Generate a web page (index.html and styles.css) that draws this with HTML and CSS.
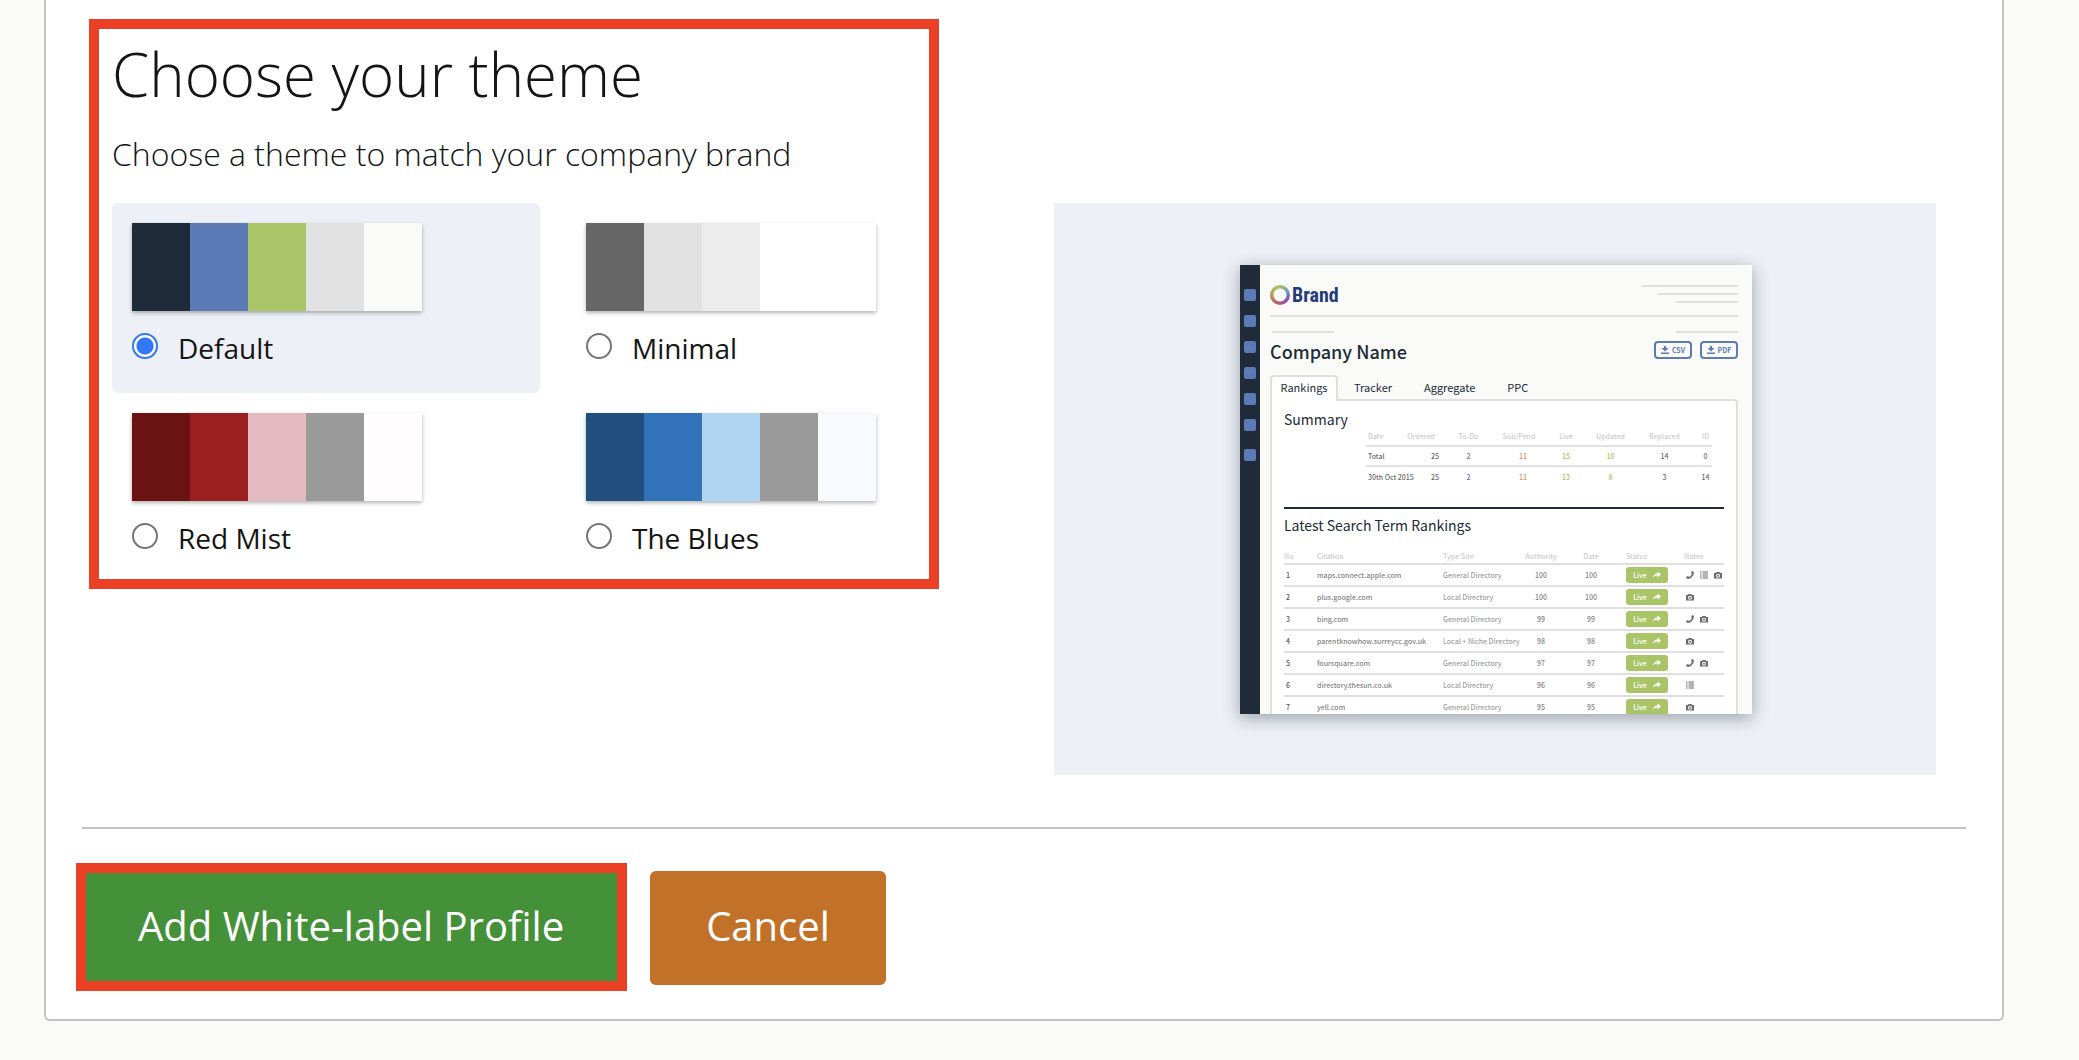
FILE: index.html
```html
<!DOCTYPE html>
<html lang="en">
<head>
    <meta charset="UTF-8">
    <meta name="viewport" content="width=device-width, initial-scale=1.0">
    <title>White-label Profile</title>
    <link rel="stylesheet" href="styles.css">
</head>
<body>
    <!-- shared icons -->
    <svg class="icon-defs" aria-hidden="true">
        <symbol id="icon-download" viewBox="0 0 16 16">
            <path d="M6 0h4v4h5L8 11 1 4h5zM0 13h16v3H0z"/>
        </symbol>
        <symbol id="icon-share" viewBox="0 0 16 16">
            <path d="M9 1l7 6-7 6v-4C5 9 2.500 10 0 14c.5-6 4-9 9-9z"/>
        </symbol>
        <symbol id="icon-phone" viewBox="0 0 16 16">
            <path d="M12 0l3.500 1.500C17 9 9 17 1.500 15.500L0 12l4-2 2 2c3-1.500 5-3.500 6-6.500l-2-1.500z"/>
        </symbol>
        <symbol id="icon-list" viewBox="0 0 16 16">
            <path d="M0 1h3v2H0zM5 1h11v2H5zM0 5h3v2H0zM5 5h11v2H5zM0 9h3v2H0zM5 9h11v2H5zM0 13h3v2H0zM5 13h11v2H5z"/>
        </symbol>
        <symbol id="icon-camera" viewBox="0 0 16 16">
            <path fill-rule="evenodd" d="M5 2h6l1 2h4v11H0V4h4zM8 5.500a4 4 0 1 0 0 8 4 4 0 0 0 0-8zM8 7.500a2 2 0 1 1 0 4 2 2 0 0 1 0-4z"/>
        </symbol>
    </svg>

    <form class="panel">
        <section class="theme-section">
            <h1 class="theme-title">Choose your theme</h1>
            <p class="theme-intro">Choose a theme to match your company brand</p>

            <div class="theme-columns">
                <div class="theme-list">
                    <label class="theme-card">
                        <span class="swatches">
                            <span class="swatch navy"></span>
                            <span class="swatch slate-blue"></span>
                            <span class="swatch lime"></span>
                            <span class="swatch silver"></span>
                            <span class="swatch off-white"></span>
                        </span>
                        <span class="theme-option">
                            <input type="radio" name="theme" value="default" checked>
                            <span>Default</span>
                        </span>
                    </label>
                    <label class="theme-card">
                        <span class="swatches">
                            <span class="swatch charcoal"></span>
                            <span class="swatch silver"></span>
                            <span class="swatch light-grey"></span>
                            <span class="swatch white"></span>
                            <span class="swatch white"></span>
                        </span>
                        <span class="theme-option">
                            <input type="radio" name="theme" value="minimal">
                            <span>Minimal</span>
                        </span>
                    </label>
                    <label class="theme-card">
                        <span class="swatches">
                            <span class="swatch maroon"></span>
                            <span class="swatch red"></span>
                            <span class="swatch pink"></span>
                            <span class="swatch grey"></span>
                            <span class="swatch blush"></span>
                        </span>
                        <span class="theme-option">
                            <input type="radio" name="theme" value="red-mist">
                            <span>Red Mist</span>
                        </span>
                    </label>
                    <label class="theme-card">
                        <span class="swatches">
                            <span class="swatch deep-blue"></span>
                            <span class="swatch blue"></span>
                            <span class="swatch sky"></span>
                            <span class="swatch grey"></span>
                            <span class="swatch ice"></span>
                        </span>
                        <span class="theme-option">
                            <input type="radio" name="theme" value="the-blues">
                            <span>The Blues</span>
                        </span>
                    </label>
                </div>

                <div class="preview">
                    <div class="report">
                        <div class="report-sidebar">
                            <span class="nav-dot"></span>
                            <span class="nav-dot"></span>
                            <span class="nav-dot"></span>
                            <span class="nav-dot"></span>
                            <span class="nav-dot"></span>
                            <span class="nav-dot"></span>
                            <span class="nav-dot last"></span>
                        </div>

                        <div class="report-main">
                            <div class="report-header">
                                <div class="brand">
                                    <span class="brand-ring"></span>
                                    <span class="brand-name">Brand</span>
                                </div>
                                <div class="address-lines">
                                    <span class="line long"></span>
                                    <span class="line medium"></span>
                                    <span class="line"></span>
                                </div>
                            </div>

                            <div class="meta-lines">
                                <span class="line"></span>
                                <span class="line"></span>
                            </div>

                            <div class="company-row">
                                <h2 class="company-name">Company Name</h2>
                                <div class="export-buttons">
                                    <button type="button" class="export-btn"><svg class="icon"><use href="#icon-download"/></svg>CSV</button>
                                    <button type="button" class="export-btn"><svg class="icon"><use href="#icon-download"/></svg>PDF</button>
                                </div>
                            </div>

                            <div class="tabs">
                                <button type="button" class="tab active">Rankings</button>
                                <button type="button" class="tab">Tracker</button>
                                <button type="button" class="tab">Aggregate</button>
                                <button type="button" class="tab">PPC</button>
                            </div>

                            <div class="tab-panel">
                                <div class="summary">
                                    <h3 class="report-heading">Summary</h3>
                                    <table class="summary-table">
                                        <colgroup>
                                            <col class="col-date"><col class="col-ordered"><col class="col-todo"><col class="col-pending">
                                            <col class="col-live"><col class="col-updated"><col class="col-replaced"><col class="col-id">
                                        </colgroup>
                                        <thead>
                                            <tr><th>Date</th><th>Ordered</th><th>To-Do</th><th>Sub/Pend</th><th>Live</th><th>Updated</th><th>Replaced</th><th>ID</th></tr>
                                        </thead>
                                        <tbody>
                                            <tr><td>Total</td><td>25</td><td class="todo">2</td><td class="pending">11</td><td class="live">15</td><td class="live">10</td><td>14</td><td>0</td></tr>
                                            <tr><td>30th Oct 2015</td><td>25</td><td class="todo">2</td><td class="pending">11</td><td class="live">13</td><td class="live">8</td><td>3</td><td>14</td></tr>
                                        </tbody>
                                    </table>
                                </div>

                                <div class="rankings">
                                    <h3 class="report-heading">Latest Search Term Rankings</h3>
                                    <table class="rankings-table">
                                        <colgroup>
                                            <col class="col-no"><col class="col-citation"><col class="col-type"><col class="col-authority">
                                            <col class="col-added"><col class="col-status"><col class="col-notes">
                                        </colgroup>
                                        <thead>
                                            <tr><th>No</th><th>Citation</th><th>Type Site</th><th>Authority</th><th>Date</th><th>Status</th><th>Notes</th></tr>
                                        </thead>
                                        <tbody>
                                            <tr>
                                                <td>1</td><td>maps.connect.apple.com</td><td>General Directory</td><td>100</td><td>100</td>
                                                <td><a href="#" class="live-btn">Live<svg class="icon"><use href="#icon-share"/></svg></a></td>
                                                <td><span class="notes"><svg class="icon"><use href="#icon-phone"/></svg><svg class="icon"><use href="#icon-list"/></svg><svg class="icon"><use href="#icon-camera"/></svg></span></td>
                                            </tr>
                                            <tr>
                                                <td>2</td><td>plus.google.com</td><td>Local Directory</td><td>100</td><td>100</td>
                                                <td><a href="#" class="live-btn">Live<svg class="icon"><use href="#icon-share"/></svg></a></td>
                                                <td><span class="notes"><svg class="icon"><use href="#icon-camera"/></svg></span></td>
                                            </tr>
                                            <tr>
                                                <td>3</td><td>bing.com</td><td>General Directory</td><td>99</td><td>99</td>
                                                <td><a href="#" class="live-btn">Live<svg class="icon"><use href="#icon-share"/></svg></a></td>
                                                <td><span class="notes"><svg class="icon"><use href="#icon-phone"/></svg><svg class="icon"><use href="#icon-camera"/></svg></span></td>
                                            </tr>
                                            <tr>
                                                <td>4</td><td>parentknowhow.surreycc.gov.uk</td><td>Local + Niche Directory</td><td>98</td><td>98</td>
                                                <td><a href="#" class="live-btn">Live<svg class="icon"><use href="#icon-share"/></svg></a></td>
                                                <td><span class="notes"><svg class="icon"><use href="#icon-camera"/></svg></span></td>
                                            </tr>
                                            <tr>
                                                <td>5</td><td>foursquare.com</td><td>General Directory</td><td>97</td><td>97</td>
                                                <td><a href="#" class="live-btn">Live<svg class="icon"><use href="#icon-share"/></svg></a></td>
                                                <td><span class="notes"><svg class="icon"><use href="#icon-phone"/></svg><svg class="icon"><use href="#icon-camera"/></svg></span></td>
                                            </tr>
                                            <tr>
                                                <td>6</td><td>directory.thesun.co.uk</td><td>Local Directory</td><td>96</td><td>96</td>
                                                <td><a href="#" class="live-btn">Live<svg class="icon"><use href="#icon-share"/></svg></a></td>
                                                <td><span class="notes"><svg class="icon"><use href="#icon-list"/></svg></span></td>
                                            </tr>
                                            <tr>
                                                <td>7</td><td>yell.com</td><td>General Directory</td><td>95</td><td>95</td>
                                                <td><a href="#" class="live-btn">Live<svg class="icon"><use href="#icon-share"/></svg></a></td>
                                                <td><span class="notes"><svg class="icon"><use href="#icon-camera"/></svg></span></td>
                                            </tr>
                                        </tbody>
                                    </table>
                                </div>
                            </div>
                        </div>
                    </div>
                </div>
            </div>
        </section>

        <div class="actions">
            <button type="submit" class="btn btn-add">Add White-label Profile</button>
            <button type="button" class="btn btn-cancel">Cancel</button>
        </div>
    </form>
</body>
</html>
```

FILE: styles.css
```css
*,
*::after {
    margin: 0;
    padding: 0;
    box-sizing: border-box;
}

body {
    font-family: "Open Sans", "Noto Sans", sans-serif;
    background: #fafaf8;
    color: #141414;
    padding: 0 75px 39px 44px;
}

button {
    font-family: inherit;
    cursor: pointer;
}

.icon-defs {
    display: none;
}

.icon {
    width: 8px;
    height: 8px;
    fill: currentColor;
    flex-shrink: 0;
}

.panel {
    background: #fff;
    border: 2px solid #c2c2c2;
    border-top: none;
    border-radius: 0 0 6px 6px;
    padding: 38px 36px 34px;
}

/* Theme picker */
.theme-section {
    position: relative;
    padding: 0 30px;
}

/* highlight frame round the theme picker */
.theme-section::after {
    content: '';
    position: absolute;
    top: -19px;
    left: 7px;
    width: 850px;
    height: 570px;
    border: 10px solid #ea4025;
    pointer-events: none;
}

.theme-title {
    font-size: 60px;
    line-height: 72px;
    font-weight: 300;
}

.theme-intro {
    margin-top: 22px;
    font-size: 32px;
    line-height: 44px;
    font-weight: 300;
}

.theme-columns {
    display: grid;
    grid-template-columns: repeat(2, minmax(0, 1fr));
    gap: 60px;
    margin-top: 27px;
}

.theme-list {
    display: grid;
    grid-template-columns: repeat(2, 1fr);
    column-gap: 26px;
    align-content: start;
}

.theme-card {
    padding: 20px 20px 26px;
    border-radius: 6px;
    cursor: pointer;
}

.theme-card:has(input:checked) {
    background: #edf0f6;
}

.swatches {
    display: flex;
    width: 290px;
    height: 88px;
    box-shadow: 0 2px 4px rgba(0, 0, 0, 0.3);
}

.swatch {
    flex: 1;
}

.navy { background: #202b39; }
.slate-blue { background: #5c7ab5; }
.lime { background: #aac468; }
.silver { background: #e1e1e1; }
.off-white { background: #fafaf8; }
.charcoal { background: #666; }
.light-grey { background: #ececec; }
.white { background: #fff; }
.maroon { background: #6b1213; }
.red { background: #9b1e20; }
.pink { background: #e2bac0; }
.grey { background: #9a9a9a; }
.blush { background: #fffdfe; }
.deep-blue { background: #21507f; }
.blue { background: #3272b9; }
.sky { background: #b0d5f2; }
.ice { background: #f9faff; }

.theme-option {
    display: flex;
    gap: 20px;
    margin-top: 18px;
    font-size: 28px;
    line-height: 38px;
}

.theme-option input {
    appearance: none;
    width: 26px;
    height: 26px;
    margin-top: 4px;
    border: 2px solid #767676;
    border-radius: 50%;
    background: #fff;
}

.theme-option input:checked {
    border-color: #3376f6;
    background: radial-gradient(circle, #3376f6 8px, #fff 9px);
}

/* Report preview */
.preview {
    display: flex;
    justify-content: center;
    padding: 62px 0 61px 2px;
    background: #edf0f6;
}

.report {
    display: flex;
    width: 512px;
    height: 449px;
    overflow: hidden;
    background: #fafaf8;
    color: #202b39;
    font-family: "Noto Sans CJK SC", "Noto Sans", sans-serif;
    box-shadow: 0 4px 16px rgba(32, 43, 57, 0.4);
}

.report-sidebar {
    width: 20px;
    padding: 24px 4px;
    display: flex;
    flex-direction: column;
    gap: 14px;
    background: #202b39;
}

.nav-dot {
    height: 12px;
    border-radius: 2px;
    background: #5c7ab5;
}

.nav-dot.last {
    margin-top: 4px;
}

.report-main {
    flex: 1;
    min-width: 0;
    padding: 20px 14px 0 10px;
}

.report-header {
    display: flex;
    justify-content: space-between;
    height: 32px;
    border-bottom: 2px solid #e0e0e0;
}

.brand {
    display: flex;
    gap: 2px;
    height: 20px;
}

.brand-ring {
    width: 20px;
    height: 20px;
    border-radius: 50%;
    background: radial-gradient(circle, #fafaf8 6px, transparent 7px),
        conic-gradient(#a2bf6a, #6fa0b8 60deg, #6c6fc0 100deg, #8a4fc4 130deg, #b25a72 180deg, #c07058 230deg, #b5a85f 290deg, #a9c467);
}

.brand-name {
    font-family: "Roboto Condensed", "Open Sans Condensed", "Noto Sans CJK SC", sans-serif;
    font-size: 20px;
    line-height: 20px;
    font-weight: 700;
    color: #253a78;
}

.address-lines {
    display: flex;
    flex-direction: column;
    align-items: flex-end;
    gap: 6px;
}

.line {
    width: 62px;
    height: 2px;
    background: #e0e0e0;
}

.line.medium {
    width: 80px;
}

.line.long {
    width: 96px;
}

.meta-lines {
    display: flex;
    justify-content: space-between;
    margin-top: 14px;
    padding-left: 2px;
}

.company-row {
    display: flex;
    justify-content: space-between;
    margin-top: 8px;
}

.company-name {
    font-size: 18px;
    line-height: 20px;
    height: 18px;
    font-weight: 500;
}

.export-buttons {
    display: flex;
    gap: 8px;
}

.export-btn {
    display: flex;
    align-items: center;
    justify-content: center;
    gap: 3px;
    width: 38px;
    height: 18px;
    border: 2px solid #5c7ab5;
    border-radius: 4px;
    background: none;
    color: #5c7ab5;
    font-size: 7px;
    line-height: 14px;
    font-weight: 700;
}

.tabs {
    display: flex;
    margin-top: 16px;
}

.tab {
    height: 26px;
    margin-bottom: -2px;
    padding: 0 16px 2px;
    border: none;
    background: none;
    color: inherit;
    font-size: 11px;
    line-height: 24px;
}

.tab.active {
    width: 68px;
    padding: 0 0 4px;
    border: 2px solid #e0e0e0;
    border-bottom: none;
    border-radius: 4px 4px 0 0;
    background: #fff;
    line-height: 20px;
    position: relative;
    z-index: 1;
}

.tab-panel {
    min-height: 400px;
    padding: 8px 12px 0;
    border: 2px solid #e0e0e0;
    border-radius: 0 4px 0 0;
    background: #fff;
}

.report-heading {
    font-size: 14px;
    line-height: 20px;
    font-weight: 400;
}

.summary {
    display: flex;
    height: 98px;
}

.summary .report-heading {
    width: 82px;
}

.report table {
    table-layout: fixed;
    border-collapse: separate;
    border-spacing: 0;
    font-size: 7px;
    line-height: 12px;
    font-weight: 500;
    white-space: nowrap;
}

.report th {
    color: #ccc;
    font-weight: 500;
    border-bottom: 2px solid #e0e0e0;
}

.summary-table {
    width: 346px;
    height: 60px;
    margin-top: 18px;
}

.summary-table th,
.summary-table td {
    height: 20px;
    text-align: center;
}

.summary-table td {
    color: #6b6b6b;
}

.summary-table tbody tr:first-child td {
    border-bottom: 2px solid #e0e0e0;
}

.summary-table th:first-child,
.summary-table td:first-child {
    padding-left: 2px;
    text-align: left;
}

.summary-table td:nth-child(2) {
    padding-right: 1px;
    text-align: right;
}

.report .todo { color: #5c7ab5; }
.report .pending { color: #cf9468; padding-left: 8px; }
.report .live { color: #aac468; }

.col-date { width: 36px; }
.col-ordered { width: 38px; }
.col-todo { width: 57px; }
.col-pending { width: 44px; }
.col-live { width: 50px; }
.col-updated { width: 39px; }
.col-replaced { width: 69px; }
.col-id { width: 13px; }

.rankings {
    padding-top: 6px;
    border-top: 2px solid #202b39;
}

.rankings-table {
    width: 100%;
    margin-top: 14px;
    text-align: left;
}

.rankings-table th {
    height: 16px;
}

.rankings-table td {
    height: 22px;
    border-bottom: 2px solid #e0e0e0;
    color: #858585;
}

.rankings-table td:first-child {
    padding-left: 2px;
    color: #555;
}

.rankings-table td:nth-child(3) {
    color: #a0a0a0;
}

.rankings-table th:nth-child(4),
.rankings-table td:nth-child(4),
.rankings-table th:nth-child(5),
.rankings-table td:nth-child(5) {
    text-align: center;
}

.rankings-table th:nth-child(6),
.rankings-table td:nth-child(6) {
    padding-left: 9px;
}

.col-no { width: 33px; }
.col-citation { width: 126px; }
.col-type { width: 74px; }
.col-authority { width: 48px; }
.col-added { width: 52px; }
.col-status { width: 67px; }
.col-notes { width: 40px; }

.live-btn {
    display: flex;
    align-items: center;
    justify-content: center;
    gap: 6px;
    width: 42px;
    height: 16px;
    border-radius: 3px;
    background: #aac468;
    color: #fff;
    text-decoration: none;
}

.notes {
    display: flex;
    gap: 6px;
    padding-left: 2px;
    color: #6b6b6b;
}

/* Form actions */
.actions {
    display: flex;
    gap: 30px;
    margin-top: 52px;
    padding-top: 42px;
    border-top: 2px solid #c2c2c2;
}

.btn {
    padding: 28px 56px 32px;
    border: none;
    border-radius: 6px;
    color: #fff;
    font-size: 40px;
    line-height: 54px;
}

.btn-add {
    position: relative;
    background: #44913a;
}

/* highlight frame round the main button */
.btn-add::after {
    content: '';
    position: absolute;
    inset: -8px -7px -6px -6px;
    border: 10px solid #ea4025;
}

.btn-cancel {
    background: #c17128;
}
```
